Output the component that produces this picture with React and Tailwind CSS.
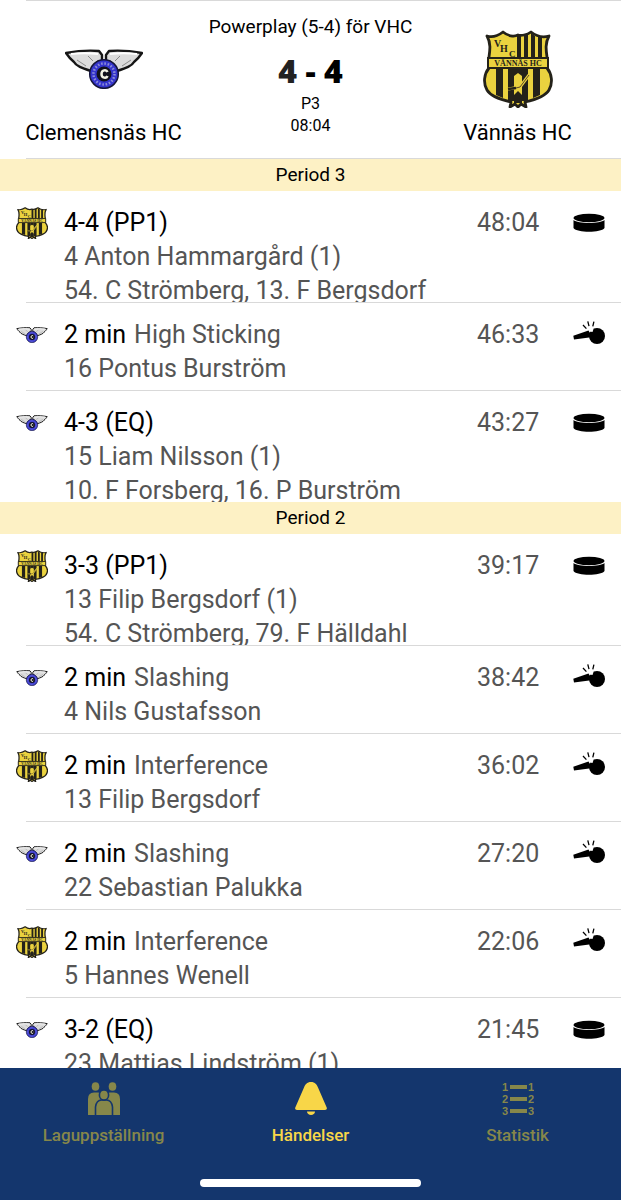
import React, { useState } from "react";
import clsx from "clsx";

const HOME = "Clemensnäs HC";
const AWAY = "Vännäs HC";

const periods = [
  {
    name: "Period 3",
    events: [
      {
        team: AWAY,
        type: "goal",
        title: "4-4 (PP1)",
        player: "4 Anton Hammargård (1)",
        assists: "54. C Strömberg, 13. F Bergsdorf",
        time: "48:04",
      },
      { team: HOME, type: "penalty", title: "2 min", reason: "High Sticking", player: "16 Pontus Burström", time: "46:33" },
      {
        team: HOME,
        type: "goal",
        title: "4-3 (EQ)",
        player: "15 Liam Nilsson (1)",
        assists: "10. F Forsberg, 16. P Burström",
        time: "43:27",
      },
    ],
  },
  {
    name: "Period 2",
    events: [
      {
        team: AWAY,
        type: "goal",
        title: "3-3 (PP1)",
        player: "13 Filip Bergsdorf (1)",
        assists: "54. C Strömberg, 79. F Hälldahl",
        time: "39:17",
      },
      { team: HOME, type: "penalty", title: "2 min", reason: "Slashing", player: "4 Nils Gustafsson", time: "38:42" },
      { team: AWAY, type: "penalty", title: "2 min", reason: "Interference", player: "13 Filip Bergsdorf", time: "36:02" },
      { team: HOME, type: "penalty", title: "2 min", reason: "Slashing", player: "22 Sebastian Palukka", time: "27:20" },
      { team: AWAY, type: "penalty", title: "2 min", reason: "Interference", player: "5 Hannes Wenell", time: "22:06" },
      { team: HOME, type: "goal", title: "3-2 (EQ)", player: "23 Mattias Lindström (1)", time: "21:45" },
    ],
  },
];

function ClemensnasLogo({ className }) {
  return (
    <svg viewBox="0 0 78 40" className={className} aria-hidden="true">
      <g fill="#dcdcdc" stroke="#151515" strokeWidth="2.4" strokeLinejoin="round">
        <path d="M1 4C12 2 23 1 34 2L37 6V11C31 13 28 16 26 22C17 19 11 17 9 13C5 10 3 7 1 4Z" />
        <path d="M77 4C66 2 55 1 44 2L41 6V11C47 13 50 16 52 22C61 19 67 17 69 13C73 10 75 7 77 4Z" />
      </g>
      <path d="M6 5C14 4 24 4 33 5M72 5C64 4 54 4 45 5" stroke="#fff" strokeWidth="2" fill="none" />
      <path d="M23 7L28 12M12 11L21 17M55 7L50 12M66 11L57 17" stroke="#8b8b8b" fill="none" />
      <circle cx="39" cy="25" r="14.3" fill="#3434cc" stroke="#15153a" strokeWidth="1.5" />
      <circle cx="39" cy="25" r="10.5" fill="none" stroke="#8c8cd8" strokeWidth="2.5" strokeDasharray="1.6 1.7" />
      <circle cx="39" cy="25" r="7.5" fill="#11111c" />
      <path d="M42.5 23C41.5 20.5 36.5 20.5 36.5 25S41.5 29.5 42.5 27" fill="none" stroke="#f2f2e4" strokeWidth="2.5" />
    </svg>
  );
}

function VannasLogo({ className }) {
  return (
    <svg viewBox="0 0 70 78" preserveAspectRatio="none" className={className} aria-hidden="true">
      <path
        d="M4 6C10 8 16 5 20 2C25 6 31 7 35 5C38 6 44 5 48 2C53 6 59 8 66 6C62 13 63 20 64 27V38C69 44 70 53 66 60C62 67 51 70 42 72L43 77L38 74L35 77L32 74L27 77L28 72C19 70 8 67 4 60C0 53 1 44 6 38V27C7 20 8 13 4 6Z"
        fill="#ead23f"
        stroke="#24221a"
        strokeWidth="2.8"
        strokeLinejoin="round"
      />
      <g fill="#24221a">
        <path d="M34 5H38V28H34ZM41 5L45 4V28H41ZM48 3L52 6V28H48ZM55 7H59V28H55Z" />
        <path d="M13 39H20V68L13 65ZM50 39H57V65L50 68ZM25 39H31V71H25ZM39 39H45V71H39Z" />
        <path d="M31 39H39V46L35 43L31 46ZM31 65L35 61L39 65V73H31Z" />
      </g>
      <path d="M46 45L37 57L25 59" stroke="#ead23f" strokeWidth="3" fill="none" />
      <path d="M46 45L37 57L33 58" stroke="#5b4728" fill="none" />
      <path d="M25 59L33 58" stroke="#24221a" strokeWidth="2.5" />
      <path d="M5 28H65V38H5Z" fill="#ead23f" stroke="#24221a" strokeWidth="2" />
      <g fill="#24221a" fontFamily="Liberation Serif, serif" fontWeight="700">
        <text x="11" y="17" fontSize="10">V</text>
        <text x="17" y="22" fontSize="10">H</text>
        <text x="26" y="27" fontSize="9">C</text>
        <text x="35" y="36" fontSize="8" textAnchor="middle">VÄNNÄS HC</text>
      </g>
    </svg>
  );
}

function PuckIcon() {
  return (
    <svg viewBox="0 0 32 20" className="w-8 h-5" aria-hidden="true">
      <ellipse cx="16" cy="5" rx="15.5" ry="4.2" />
      <path d="M0.5 7C5 11 27 11 31.5 7V15C28 20 4 20 0.5 15Z" />
    </svg>
  );
}

function WhistleIcon() {
  return (
    <svg viewBox="0 0 32 26" className="w-8 h-6.5 -mt-1" aria-hidden="true">
      <circle cx="24" cy="16" r="8" />
      <path d="M0.3 15.7L15.5 10.5L17 13H20V17L1 19.5Z" />
      <path d="M17 7L20.5 9L19.5 12L17 11.5Z" fill="#fff" />
      <path d="M10 5L13.4 8.6M14.8 1.3L16 6.2M20.9 1.6L19.8 6.3" stroke="#000" strokeWidth="1.3" />
    </svg>
  );
}

function TeamIcon() {
  return (
    <svg viewBox="0 0 32 33" className="w-8 h-[33px]" fill="currentColor" aria-hidden="true">
      <ellipse cx="7.5" cy="4.5" rx="3.8" ry="4.3" />
      <ellipse cx="24.5" cy="4.5" rx="3.8" ry="4.3" />
      <path d="M0 33V17Q0 10.5 6 10.5H10Q13 10.5 13.5 14V33ZM32 33V17Q32 10.5 26 10.5H22Q19 10.5 18.500 14V33Z" />
      <g stroke="#14366d" strokeWidth="1.6">
        <path d="M7.5 34V25Q8.500 18 13.5 18H18.5Q23.500 18 24.5 25V34Z" />
        <ellipse cx="16" cy="13" rx="4.6" ry="5.1" />
      </g>
    </svg>
  );
}

function BellIcon() {
  return (
    <svg viewBox="0 0 32 33" className="w-8 h-[33px]" fill="currentColor" aria-hidden="true">
      <path d="M16 0C12 0 10 2.5 9 5.5L0.3 25.5Q-0.5 28 2 28H30Q32.5 28 31.7 25.5L23 5.5C22 2.5 20 0 16 0Z" />
      <path d="M12 29.500H20C20 31.5 18 33 16 33S12 31.5 12 29.5Z" />
    </svg>
  );
}

function StatsIcon() {
  return (
    <svg viewBox="0 0 32 33" className="w-8 h-[33px]" fill="currentColor" aria-hidden="true">
      {[1, 2, 3].map((n) => (
        <g key={n} fontFamily="Liberation Sans, sans-serif" fontWeight="700" fontSize="11">
          <text x="0" y={n * 12 - 3}>{n}</text>
          <rect x="8" y={n * 12 - 9} width="17" height="4" />
          <text x="26" y={n * 12 - 3}>{n}</text>
        </g>
      ))}
    </svg>
  );
}

const tabs = [
  { id: "lineup", label: "Laguppställning", icon: TeamIcon },
  { id: "events", label: "Händelser", icon: BellIcon },
  { id: "stats", label: "Statistik", icon: StatsIcon },
];

function TeamHeader({ name, children }) {
  return (
    <div className="flex flex-col items-center">
      <div className="h-20 mt-7 flex items-center">{children}</div>
      <h2 className="mt-2 text-[22px] leading-8 whitespace-nowrap">{name}</h2>
    </div>
  );
}

function EventRow({ event, last }) {
  return (
    <li className={clsx("overflow-hidden", event.type === "goal" ? (last ? "h-[111px]" : "h-28") : "h-22")}>
      <div className="h-full relative flex items-start pl-4 pr-4 pt-[15px] text-[25px] leading-[34px] text-[#555]">
        <div className="w-8 h-[34px] mr-4 flex items-center shrink-0">
          {event.team === HOME ? <ClemensnasLogo className="w-8 h-4" /> : <VannasLogo className="w-8 h-8" />}
        </div>
        <div className="flex-1 min-w-0 whitespace-nowrap">
          <p>
            <span className="text-black">{event.title}</span>
            {event.reason && <span className="ml-2">{event.reason}</span>}
          </p>
          <p>{event.player}</p>
          {event.assists && <p>{event.assists}</p>}
        </div>
        <time className="w-24 shrink-0">{event.time}</time>
        <div className="w-8 h-[34px] flex items-center shrink-0">
          {event.type === "goal" ? <PuckIcon /> : <WhistleIcon />}
        </div>
        {!last && <div className="absolute bottom-0 left-[26px] right-0 h-px bg-[#d9d9d9]" />}
      </div>
    </li>
  );
}

function App() {
  const [active, setActive] = useState("events");

  return (
    <div className="h-screen flex flex-col bg-white text-black font-['Roboto',sans-serif]">
      <header className="shrink-0">
        <div className="ml-[26px] h-px bg-[#d9d9d9]" />
        <div className="grid grid-cols-3 pb-[9px]">
          <TeamHeader name={HOME}>
            <ClemensnasLogo className="w-[78px] h-10" />
          </TeamHeader>
          <div className="flex flex-col items-center pt-[14px] whitespace-nowrap">
            <p className="text-[19px] leading-6">Powerplay (5-4) för VHC</p>
            <p className="mt-3 text-[32px] leading-10 font-black font-['Noto_Sans',sans-serif]">
              <span className="text-[#222]">4</span> - 4
            </p>
            <p className="mt-[2px] text-[16px] leading-[22px]">P3</p>
            <p className="text-[16px] leading-[22px]">08:04</p>
          </div>
          <TeamHeader name={AWAY}>
            <VannasLogo className="w-[70px] h-[78px]" />
          </TeamHeader>
        </div>
        <div className="ml-[26px] h-px bg-[#d9d9d9]" />
      </header>

      <main className="flex-1 min-h-0 overflow-y-auto [scrollbar-width:none]">
        {periods.map((period) => (
          <section key={period.name}>
            <h3 className="h-8 text-[19px] leading-8 text-center bg-[#fdf1c5]">{period.name}</h3>
            <ul>
              {period.events.map((event, i) => (
                <EventRow key={event.time} event={event} last={i === period.events.length - 1} />
              ))}
            </ul>
          </section>
        ))}
      </main>

      <nav className="shrink-0 bg-[#14366d] pb-[13px]">
        <div className="grid grid-cols-3">
          {tabs.map(({ id, label, icon: Icon }) => (
            <button
              key={id}
              type="button"
              onClick={() => setActive(id)}
              className={clsx(
                "flex flex-col items-center pt-[14px] text-[17px] leading-6 font-medium",
                active === id ? "text-[#f8d648]" : "text-[#86874a]"
              )}
            >
              <Icon />
              <span className="mt-2">{label}</span>
            </button>
          ))}
        </div>
        <div className="mt-8 mx-auto w-[221px] h-2 rounded-full bg-white" />
      </nav>
    </div>
  );
}

export default App;
